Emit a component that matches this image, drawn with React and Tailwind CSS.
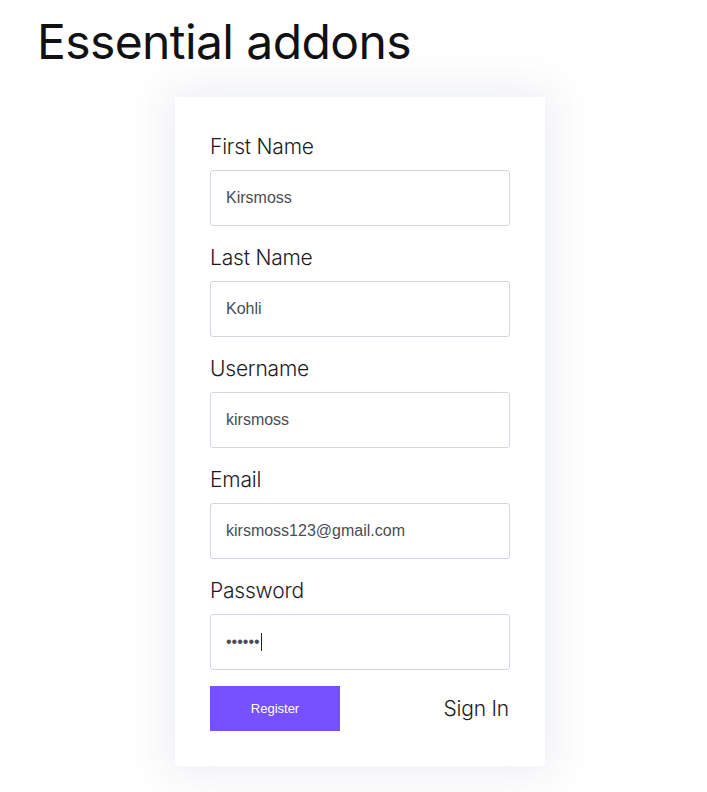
import React from "react";

const fields = [
  { label: "First Name", value: "Kirsmoss" },
  { label: "Last Name", value: "Kohli" },
  { label: "Username", value: "kirsmoss" },
  { label: "Email", value: "kirsmoss123@gmail.com" },
];

function Label({ children }) {
  return (
    <div className="h-[24px] leading-[24px] text-[21px] font-light text-[#1b1b1f] mb-[11px] font-['Inter',sans-serif] tracking-[-0.2px]">
      {children}
    </div>
  );
}

export default function App() {
  return (
    <div className="min-h-[792px] bg-white pb-[26px]">
      <h1 className="pl-[37px] pt-[12px] h-[60px] text-[48px] leading-[60px] font-normal text-[#111113] font-['Inter',sans-serif] tracking-[-0.6px]">
        Essential addons
      </h1>
      <div className="ml-[175px] mt-[37px] w-[370px] bg-white rounded-[3px] shadow-[0_0_40px_10px_rgba(225,227,235,0.55)] pt-[38px] pb-[35px] px-[35px]">
        {fields.map((f) => (
          <div key={f.label} className="mb-[20px]">
            <Label>{f.label}</Label>
            <div className="h-[56px] border border-[#d6d5e2] rounded-[3px] flex items-center px-[15px] text-[16px] text-[#4a4d55] font-['Liberation_Sans',Arial,sans-serif]">
              {f.value}
            </div>
          </div>
        ))}
        <div>
          <Label>Password</Label>
          <div className="h-[56px] border border-[#d6d5e2] rounded-[3px] flex items-center px-[15px] text-[16px] text-[#4a4d55] font-['Liberation_Sans',Arial,sans-serif]">
            <span>••••••</span>
            <span className="ml-[1px] w-px h-[18px] bg-[#222]" />
          </div>
        </div>
        <div className="mt-[16px] flex items-center justify-between">
          <button className="w-[130px] h-[45px] bg-[#7551ff] text-white text-[13px] font-medium font-['Liberation_Sans',Arial,sans-serif]">
            Register
          </button>
          <span className="text-[21px] font-light text-[#1b1b1f] font-['Inter',sans-serif] tracking-[-0.2px] mr-[1px]">
            Sign In
          </span>
        </div>
      </div>
    </div>
  );
}
